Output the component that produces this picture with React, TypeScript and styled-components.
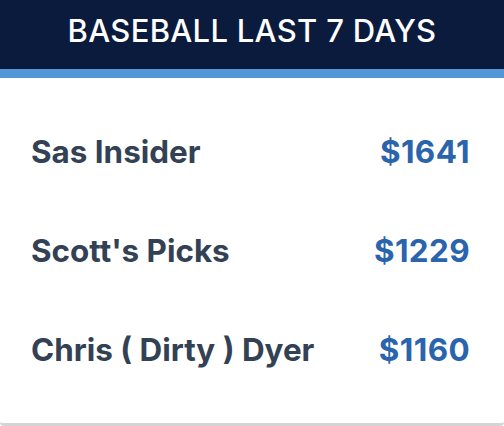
import React from "react";
import styled, { createGlobalStyle } from "styled-components";

const GlobalStyle = createGlobalStyle`
  html, body {
    margin: 0;
    padding: 0;
    background: #ffffff;
  }
  body {
    font-family: Inter, "Noto Sans", "Liberation Sans", sans-serif;
  }
`;

const Card = styled.section`
  width: 504px;
  height: 426px;
  box-sizing: border-box;
  background: #ffffff;
  border-bottom: 3px solid #d4d4d4;
  border-radius: 0 0 4px 4px;
  display: flex;
  flex-direction: column;
`;

const Header = styled.header`
  height: 78px;
  box-sizing: border-box;
  padding-bottom: 8px;
  background: #0a1b3d;
  border-bottom: 9px solid #5596d6;
  display: flex;
  align-items: center;
  justify-content: center;
`;

const Title = styled.h2`
  margin: 0;
  color: #ffffff;
  font-size: 31px;
  font-weight: 500;
  letter-spacing: 0.3px;
  line-height: 1;
`;

const List = styled.ul`
  list-style: none;
  margin: 0;
  padding: 24px 34px 0 31px;
`;

const Row = styled.li`
  height: 99px;
  display: flex;
  align-items: center;
  justify-content: space-between;
  font-size: 31.4px;
  font-weight: 700;
`;

const Name = styled.span`
  color: #334155;
`;

const Amount = styled.span`
  color: #2a64ad;
  letter-spacing: 0.4px;
`;

type Leader = {
  name: string;
  amount: number;
};

const leaders: Leader[] = [
  { name: "Sas Insider", amount: 1641 },
  { name: "Scott's Picks", amount: 1229 },
  { name: "Chris ( Dirty ) Dyer", amount: 1160 },
];

export default function App() {
  return (
    <>
      <GlobalStyle />
      <Card>
        <Header>
          <Title>BASEBALL LAST 7 DAYS</Title>
        </Header>
        <List>
          {leaders.map((l) => (
            <Row key={l.name}>
              <Name>{l.name}</Name>
              <Amount>${l.amount}</Amount>
            </Row>
          ))}
        </List>
      </Card>
    </>
  );
}
